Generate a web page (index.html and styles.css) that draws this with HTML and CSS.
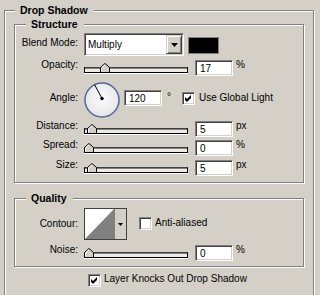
FILE: index.html
```html
<!DOCTYPE html>
<html>
<head>
<meta charset="utf-8">
<link rel="stylesheet" href="styles.css">
</head>
<body>
<div class="panel">
  <div class="legend">Drop Shadow</div>
  <div class="group structure">
    <div class="legend">Structure</div>

    <div class="row row-blend">
      <span class="label">Blend Mode:</span>
      <div class="select">
        <span class="select-text">Multiply</span>
        <span class="select-btn"><svg width="7" height="4" viewBox="0 0 7 4"><polygon points="0,0 7,0 3.5,4" fill="#000"/></svg></span>
      </div>
      <span class="swatch"></span>
    </div>

    <div class="row row-opacity">
      <span class="label">Opacity:</span>
      <div class="slider"><div class="track"></div><svg class="thumb" style="left:16px" width="10" height="10" viewBox="0 0 10 10"><polygon points="0.5,9.5 0.5,4.5 5,0.5 9.5,4.5 9.5,9.5" fill="#d4d0c8" stroke="#000"/><polyline points="1.5,8.5 1.5,5 5,1.8" fill="none" stroke="#fff"/></svg></div>
      <div class="field">17</div>
      <span class="unit">%</span>
    </div>

    <div class="row row-angle">
      <span class="label">Angle:</span>
      <svg class="dial" width="36" height="36" viewBox="0 0 36 36">
        <defs><radialGradient id="dg" cx="50%" cy="45%" r="60%"><stop offset="0" stop-color="#fcfcfc"/><stop offset="1" stop-color="#e4e4e8"/></radialGradient></defs>
        <circle cx="18" cy="18" r="17" fill="url(#dg)" stroke="#52699a" stroke-width="1.5"/>
        <line x1="18" y1="16.5" x2="10.5" y2="2.5" stroke="#000" stroke-width="1"/>
        <circle cx="18" cy="16.5" r="1.7" fill="#000"/>
      </svg>
      <div class="field angle-field">120</div>
      <span class="deg">°</span>
      <span class="check angle-check"><svg width="7" height="7" viewBox="0 0 7 7"><polygon points="0,2 2,4 6,0 6,3 2,7 0,5" fill="#000"/></svg></span>
      <span class="check-text angle-text">Use Global Light</span>
    </div>

    <div class="row row-distance">
      <span class="label">Distance:</span>
      <div class="slider"><div class="track"></div><svg class="thumb" style="left:3px" width="10" height="10" viewBox="0 0 10 10"><polygon points="0.5,9.5 0.5,4.5 5,0.5 9.5,4.5 9.5,9.5" fill="#d4d0c8" stroke="#000"/><polyline points="1.5,8.5 1.5,5 5,1.8" fill="none" stroke="#fff"/></svg></div>
      <div class="field">5</div>
      <span class="unit">px</span>
    </div>

    <div class="row row-spread">
      <span class="label">Spread:</span>
      <div class="slider"><div class="track"></div><svg class="thumb" style="left:0px" width="10" height="10" viewBox="0 0 10 10"><polygon points="0.5,9.5 0.5,4.5 5,0.5 9.5,4.5 9.5,9.5" fill="#d4d0c8" stroke="#000"/><polyline points="1.5,8.5 1.5,5 5,1.8" fill="none" stroke="#fff"/></svg></div>
      <div class="field">0</div>
      <span class="unit">%</span>
    </div>

    <div class="row row-size">
      <span class="label">Size:</span>
      <div class="slider"><div class="track"></div><svg class="thumb" style="left:3px" width="10" height="10" viewBox="0 0 10 10"><polygon points="0.5,9.5 0.5,4.5 5,0.5 9.5,4.5 9.5,9.5" fill="#d4d0c8" stroke="#000"/><polyline points="1.5,8.5 1.5,5 5,1.8" fill="none" stroke="#fff"/></svg></div>
      <div class="field">5</div>
      <span class="unit">px</span>
    </div>
  </div>

  <div class="group quality">
    <div class="legend">Quality</div>

    <div class="row row-contour">
      <span class="label">Contour:</span>
      <div class="contour">
        <svg class="contour-preview" width="29" height="30" viewBox="0 0 29 30"><rect width="29" height="30" fill="#fff"/><polygon points="0,30 29,0 29,30" fill="#808080"/></svg>
        <span class="contour-btn"><svg width="5" height="3" viewBox="0 0 5 3"><polygon points="0,0 5,0 2.5,3" fill="#000"/></svg></span>
      </div>
      <span class="check aa-check"></span>
      <span class="check-text aa-text">Anti-aliased</span>
    </div>

    <div class="row row-noise">
      <span class="label">Noise:</span>
      <div class="slider"><div class="track"></div><svg class="thumb" style="left:0px" width="10" height="10" viewBox="0 0 10 10"><polygon points="0.5,9.5 0.5,4.5 5,0.5 9.5,4.5 9.5,9.5" fill="#d4d0c8" stroke="#000"/><polyline points="1.5,8.5 1.5,5 5,1.8" fill="none" stroke="#fff"/></svg></div>
      <div class="field">0</div>
      <span class="unit">%</span>
    </div>
  </div>

  <div class="row row-knock">
    <span class="check knock-check"><svg width="7" height="7" viewBox="0 0 7 7"><polygon points="0,2 2,4 6,0 6,3 2,7 0,5" fill="#000"/></svg></span>
    <span class="check-text knock-text">Layer Knocks Out Drop Shadow</span>
  </div>
</div>
</body>
</html>
```

FILE: styles.css
```css
* { box-sizing: border-box; }
html, body { margin: 0; padding: 0; background: #d4d0c8; }
body {
  font-family: "Liberation Sans", Arial, sans-serif;
  font-size: 10px;
  line-height: 13px;
  color: #000;
  height: 295px;
  overflow: hidden;
}
.panel {
  margin: 10px 0 0 4px;
  width: 310px;
  height: 285px;
  border: 1px solid #808080;
  border-bottom: none;
  box-shadow: 1px 1px 0 #fff, inset 1px 1px 0 #fff;
}
.legend {
  display: block;
  width: max-content;
  height: 13px;
  margin: -7px 0 0 10px;
  padding: 0 6px 0 5px;
  background: #d4d0c8;
  font-weight: bold;
  font-size: 10.5px;
}
.group {
  margin: 7px 0 0 9px;
  width: 290px;
  border: 1px solid #808080;
  box-shadow: 1px 1px 0 #fff, inset 1px 1px 0 #fff;
}
.group .legend { margin-left: 11px; }
.structure { padding-bottom: 6px; }
.quality { margin-top: 15px; padding-bottom: 5px; }

.row { display: flex; align-items: flex-start; }
.label {
  flex: none;
  width: 63px;
  margin-right: 6px;
  text-align: right;
  margin-top: -2px;
}

/* blend */
.row-blend { margin-top: 2px; height: 23px; }
.row-blend .label { margin-top: 3px; }
.select {
  width: 100px;
  height: 23px;
  display: flex;
  align-items: center;
  background: #fff;
  border: 1px solid;
  border-color: #808080 #fff #fff #808080;
  box-shadow: inset 1px 1px 0 #404040, inset -1px -1px 0 #d4d0c8;
  padding: 1px;
}
.select-text { flex: 1; padding-left: 2px; }
.select-btn {
  width: 16px;
  height: 19px;
  display: flex;
  align-items: center;
  justify-content: center;
  background: #d4d0c8;
  border: 1px solid;
  border-color: #d4d0c8 #404040 #404040 #d4d0c8;
  box-shadow: inset 1px 1px 0 #fff, inset -1px -1px 0 #808080;
}
.swatch {
  width: 31px;
  height: 17px;
  margin: 4px 0 0 4px;
  background: #000;
  border: 1px solid #808080;
}

/* sliders */
.row-opacity { margin-top: 4px; height: 16px; }
.row-distance { margin-top: 3px; height: 16px; }
.row-spread { margin-top: 3px; height: 16px; }
.row-size { margin-top: 4px; height: 16px; }
.row-noise { margin-top: 5px; height: 16px; }
.slider {
  position: relative;
  width: 104px;
  height: 10px;
  margin-top: 3px;
  display: flex;
  align-items: flex-end;
}
.track {
  flex: 1;
  height: 6px;
  background: #ecebe8;
  border: 1px solid #000;
  border-top-color: #404040;
  box-shadow: 0 1px 0 #fff, inset 0 1px 0 #808080;
}
.thumb { position: absolute; bottom: 0; }
.field {
  width: 38px;
  height: 16px;
  margin-left: 7px;
  background: #fff;
  border: 1px solid;
  border-color: #808080 #fff #fff #808080;
  box-shadow: inset 1px 1px 0 #404040, inset -1px -1px 0 #d4d0c8;
  padding: 1px 0 0 4px;
  line-height: 13px;
}
.unit { margin: -2px 0 0 3px; }

/* angle */
.row-angle { margin-top: 6px; height: 36px; }
.row-angle .label { margin-top: 9px; }
.dial { flex: none; }
.angle-field { margin: 8px 0 0 4px; }
.deg { margin: 8px 0 0 5px; }
.check {
  flex: none;
  width: 13px;
  height: 13px;
  background: #fff;
  border: 1px solid;
  border-color: #808080 #fff #fff #808080;
  box-shadow: inset 1px 1px 0 #404040, inset -1px -1px 0 #d4d0c8;
  display: flex;
  align-items: center;
  justify-content: center;
}
.angle-check { margin: 10px 0 0 11px; }
.angle-text { margin: 9px 0 0 4px; }

/* quality */
.row-contour { margin-top: 3px; height: 32px; }
.row-contour .label { margin-top: 9px; }
.contour {
  width: 43px;
  height: 32px;
  display: flex;
  border: 1px solid #404040;
  background: #d4d0c8;
}
.contour-preview { flex: none; display: block; }
.contour-btn {
  flex: 1;
  display: flex;
  align-items: center;
  justify-content: center;
  border-left: 1px solid #808080;
}
.aa-check { margin: 9px 0 0 12px; }
.aa-text { margin: 8px 0 0 3px; }

.row-knock { margin: 7px 0 0 83px; }
.knock-text { margin: -2px 0 0 3px; }
```
